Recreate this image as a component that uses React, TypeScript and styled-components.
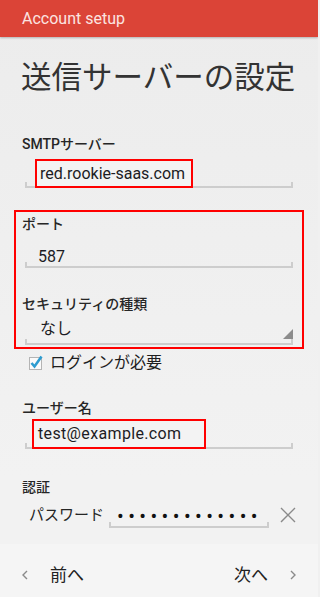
import React from "react";
import styled, { createGlobalStyle } from "styled-components";

const GlobalStyle = createGlobalStyle`
  html, body {
    margin: 0;
    padding: 0;
    background: #f0f0f0;
  }
  * {
    box-sizing: border-box;
  }
`;

const jp = `Roboto, "Noto Sans CJK JP", sans-serif`;

const StyledPage = styled("div")`
  width: 318px;
  height: 597px;
  display: flex;
  flex-direction: column;
  overflow: hidden;
  background: linear-gradient(#ececec, #f2f2f2 80%);
  font-family: ${jp};
  color: #222222;
`;

const StyledHeader = styled("header")`
  height: 37px;
  flex-shrink: 0;
  display: flex;
  align-items: center;
  padding-left: 22px;
  background-color: #db4437;
  color: #fbe4e1;
  font-size: 16px;
  box-shadow: 0 1px 2px rgba(0, 0, 0, 0.25);
`;

const StyledTitle = styled("h1")`
  margin: 21px 0 0 21px;
  font-size: 30.5px;
  line-height: 40px;
  font-weight: 400;
  color: #333333;
`;

const StyledLabel = styled("div")<{ $mt: number; $ml?: number }>`
  margin-top: ${(p) => p.$mt}px;
  margin-left: ${(p) => p.$ml ?? 22}px;
  font-size: 14px;
  line-height: 16px;
  font-weight: 500;
  color: #262626;
`;

const StyledFieldRow = styled("div")<{ $mt: number; $ml?: number; $pl?: number; $pb?: number }>`
  position: relative;
  display: flex;
  align-items: flex-end;
  width: 268px;
  margin-top: ${(p) => p.$mt}px;
  margin-left: ${(p) => p.$ml ?? 25}px;
  padding-left: ${(p) => p.$pl ?? 10}px;
  padding-bottom: ${(p) => p.$pb ?? 0}px;
  border-bottom: 2px solid #cdcdcd;

  &::before,
  &::after {
    content: "";
    position: absolute;
    bottom: 0;
    width: 2px;
    height: 4px;
    background: #cdcdcd;
  }
  &::before {
    left: 0;
  }
  &::after {
    right: 0;
  }
`;

const StyledValue = styled("span")<{ $spacing?: number }>`
  font-size: 16px;
  line-height: 20px;
  color: #1c1c24;
  letter-spacing: ${(p) => p.$spacing ?? 0}px;
`;

const StyledMark = styled("span")<{ $w: number }>`
  display: block;
  width: ${(p) => p.$w}px;
  margin-bottom: -2px;
  padding: 3px 3px 2px;
  border: 2px solid #ff0000;
  background: #f3f3f3;
`;

const StyledMarkGroup = styled("section")`
  width: 290px;
  margin: 22px 0 0 14px;
  padding: 4px 0 2px;
  border: 2px solid #ff0000;
`;

const StyledResize = styled("svg")`
  margin-left: auto;
  display: block;
`;

const StyledCheckRow = styled("label")`
  display: flex;
  align-items: center;
  gap: 6px;
  margin: 4px 0 0 28px;
  font-size: 16px;
  line-height: 20px;
  color: #1e1e1e;
`;

const StyledPasswordRow = styled("div")`
  display: flex;
  align-items: center;
  height: 26px;
  margin: 7px 0 0 29px;
`;

const StyledPasswordLabel = styled("span")`
  width: 80px;
  font-size: 15px;
  line-height: 20px;
  color: #262626;
`;

const StyledPasswordField = styled("div")`
  position: relative;
  align-self: stretch;
  width: 160px;
  padding: 4px 0 0 8px;
  border-bottom: 2px solid #cdcdcd;
  font-size: 20px;
  line-height: 20px;
  letter-spacing: 4.4px;
  white-space: nowrap;
  color: #111111;

  &::before,
  &::after {
    content: "";
    position: absolute;
    bottom: 0;
    width: 2px;
    height: 4px;
    background: #cdcdcd;
  }
  &::before {
    left: 0;
  }
  &::after {
    right: 0;
  }
`;

const StyledClear = styled("button")`
  display: flex;
  align-items: center;
  justify-content: center;
  width: 16px;
  height: 16px;
  margin-left: 11px;
  padding: 0;
  border: none;
  background: none;
`;

const StyledFooter = styled("footer")`
  margin-top: auto;
  height: 53px;
  display: flex;
  align-items: center;
  justify-content: space-between;
  padding: 9px 22px 0;
  background: #f5f5f5;
`;

const StyledNav = styled("button")`
  display: flex;
  align-items: center;
  padding: 0;
  border: none;
  background: none;
  font-family: ${jp};
  font-size: 17px;
  line-height: 22px;
  color: #222222;
`;

const Chevron = ({ dir }: { dir: "left" | "right" }) => (
  <svg width="6" height="10" viewBox="0 0 6 10">
    <polyline
      points={dir === "left" ? "5,1 1,5 5,9" : "1,1 5,5 1,9"}
      fill="none"
      stroke="#8a8a8a"
      strokeWidth="1.4"
    />
  </svg>
);

const App = () => {
  return (
    <>
      <GlobalStyle />
      <StyledPage>
        <StyledHeader>Account setup</StyledHeader>
        <StyledTitle>送信サーバーの設定</StyledTitle>

        <StyledLabel $mt={38}>SMTPサーバー</StyledLabel>
        <StyledFieldRow $mt={7}>
          <StyledMark $w={158}>
            <StyledValue>red.rookie-saas.com</StyledValue>
          </StyledMark>
        </StyledFieldRow>

        <StyledMarkGroup>
          <StyledLabel $mt={0} $ml={6}>
            ポート
          </StyledLabel>
          <StyledFieldRow $mt={16} $ml={9} $pl={13}>
            <StyledValue style={{ lineHeight: "18px" }}>587</StyledValue>
          </StyledFieldRow>

          <StyledLabel $mt={28} $ml={6}>
            セキュリティの種類
          </StyledLabel>
          <StyledFieldRow $mt={7} $ml={9} $pl={15} $pb={4}>
            <StyledValue>なし</StyledValue>
            <StyledResize width="10" height="10" viewBox="0 0 10 10">
              <polygon points="10,0 10,10 0,10" fill="#8c8c8c" />
            </StyledResize>
          </StyledFieldRow>
        </StyledMarkGroup>

        <StyledCheckRow>
          <svg width="16" height="16" viewBox="0 0 16 16">
            <rect x="1.5" y="2.5" width="12" height="12" fill="#fafafa" stroke="#b4b4b4" strokeWidth="1" />
            <polyline
              points="3.5,8 6.5,11.5 13.5,1.5"
              fill="none"
              stroke="#2d9cd0"
              strokeWidth="2.6"
            />
          </svg>
          ログインが必要
        </StyledCheckRow>

        <StyledLabel $mt={27}>ユーザー名</StyledLabel>
        <StyledFieldRow $mt={3} $pl={7}>
          <StyledMark $w={174} style={{ paddingTop: "3px", paddingBottom: "3px", paddingLeft: "4px" }}>
            <StyledValue $spacing={0.35}>test@example.com</StyledValue>
          </StyledMark>
        </StyledFieldRow>

        <StyledLabel $mt={30}>認証</StyledLabel>
        <StyledPasswordRow>
          <StyledPasswordLabel>パスワード</StyledPasswordLabel>
          <StyledPasswordField>•••••••••••••</StyledPasswordField>
          <StyledClear aria-label="clear">
            <svg width="16" height="16" viewBox="0 0 16 16">
              <path d="M1 1 L15 15 M15 1 L1 15" stroke="#8a8a8a" strokeWidth="1.4" />
            </svg>
          </StyledClear>
        </StyledPasswordRow>

        <StyledFooter>
          <StyledNav>
            <Chevron dir="left" />
            <span style={{ marginLeft: 22 }}>前へ</span>
          </StyledNav>
          <StyledNav>
            <span style={{ marginRight: 22 }}>次へ</span>
            <Chevron dir="right" />
          </StyledNav>
        </StyledFooter>
      </StyledPage>
    </>
  );
};

export default App;
